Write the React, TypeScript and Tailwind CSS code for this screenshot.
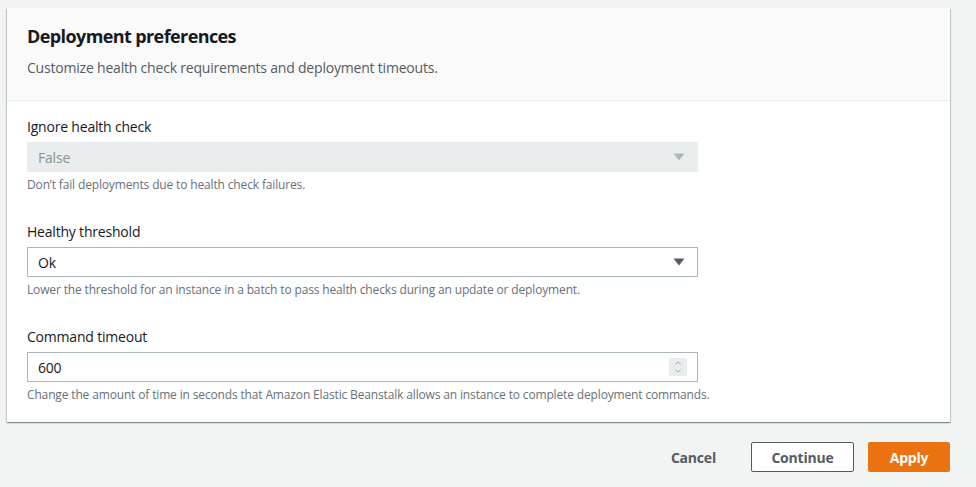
import { ChevronDown, ChevronUp } from "lucide-react";

const font = { fontFamily: "'Open Sans', 'Liberation Sans', sans-serif" };

function Caret({ muted }: { muted?: boolean }) {
  return (
    <svg width="12" height="8" viewBox="0 0 12 8" className={muted ? "fill-[#aab7b8]" : "fill-[#545b64]"}>
      <path d="M0.5 0.5h11L6 7.5z" />
    </svg>
  );
}

function Field({
  label,
  help,
  children,
}: {
  label: string;
  help: string;
  children: React.ReactNode;
}) {
  return (
    <div className="flex flex-col">
      <label className="text-[14px] leading-[20px] tracking-[-0.2px] text-[#16191f]">{label}</label>
      <div className="mt-[5px] w-[671px]">{children}</div>
      <p className="mt-[5px] text-[12px] leading-[16px] tracking-[-0.15px] text-[#687078]">{help}</p>
    </div>
  );
}

export default function App() {
  return (
    <div className="min-h-[487px] bg-[#f2f3f3] pt-[8px]" style={font}>
      <div className="ml-[7px] w-[943px] bg-white shadow-[0_1px_1px_0_rgba(0,28,36,0.3),1px_1px_1px_0_rgba(0,28,36,0.15),-1px_1px_1px_0_rgba(0,28,36,0.15)]">
        <div className="border-b border-[#eaeded] bg-[#fafafa] px-[20px] pt-[17px] pb-[22px]">
          <h2 className="text-[18px] font-bold leading-[22px] tracking-[-0.6px] text-[#16191f]">
            Deployment preferences
          </h2>
          <p className="mt-[11px] text-[14px] leading-[20px] tracking-[-0.2px] text-[#545b64]">
            Customize health check requirements and deployment timeouts.
          </p>
        </div>

        <div className="flex flex-col gap-[29px] px-[20px] pt-[16px] pb-[19px]">
          <Field label="Ignore health check" help="Don’t fail deployments due to health check failures.">
            <div className="flex h-[30px] items-center justify-between bg-[#eaeded] pr-[13px] pl-[11px] text-[14px] tracking-[-0.2px] text-[#879596]">
              <span>False</span>
              <Caret muted />
            </div>
          </Field>

          <Field
            label="Healthy threshold"
            help="Lower the threshold for an instance in a batch to pass health checks during an update or deployment."
          >
            <div className="flex h-[30px] items-center justify-between border border-[#aab7b8] bg-white pr-[12px] pl-[10px] text-[14px] tracking-[-0.2px] text-[#16191f]">
              <span>Ok</span>
              <Caret />
            </div>
          </Field>

          <Field
            label="Command timeout"
            help="Change the amount of time in seconds that Amazon Elastic Beanstalk allows an instance to complete deployment commands."
          >
            <div className="flex h-[30px] items-center justify-between border border-[#aab7b8] bg-white pr-[10px] pl-[10px] text-[14px] tracking-[-0.2px] text-[#16191f]">
              <span>600</span>
              <div className="flex h-[18px] w-[18px] flex-col items-center justify-center bg-[#eaeded] text-[#879596]">
                <ChevronUp size={10} strokeWidth={1.75} className="-mb-[1px]" />
                <ChevronDown size={10} strokeWidth={1.75} className="-mt-[1px]" />
              </div>
            </div>
          </Field>
        </div>
      </div>

      <div className="mt-[20px] flex w-[950px] items-center justify-end gap-[15px] text-[14px] font-bold tracking-[-0.2px]">
        <button className="h-[30px] px-[20px] text-[#545b64]">Cancel</button>
        <button className="h-[30px] w-[103px] rounded-[2px] border border-[#545b64] bg-white text-[#545b64]">
          Continue
        </button>
        <button className="ml-[-1px] h-[30px] w-[82px] rounded-[2px] bg-[#ec7211] text-white">Apply</button>
      </div>
    </div>
  );
}
